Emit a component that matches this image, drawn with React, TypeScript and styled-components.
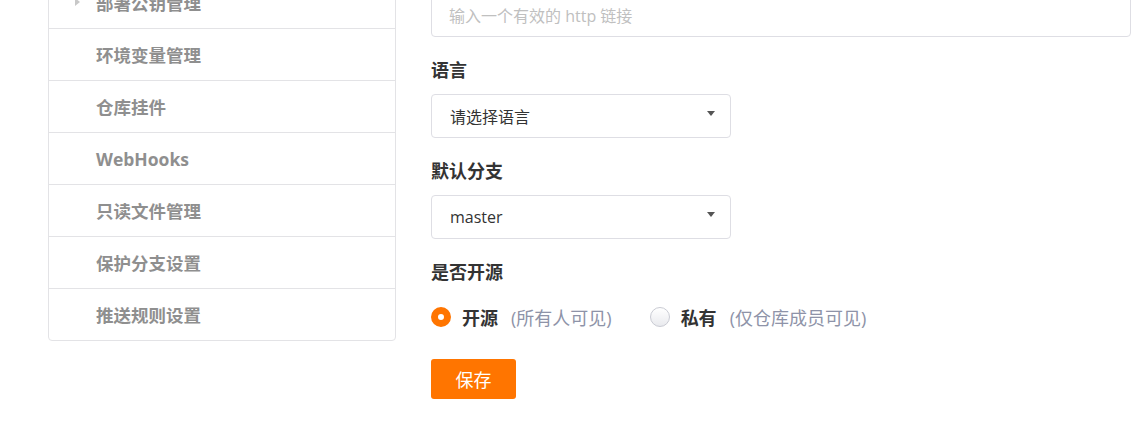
import React from "react";
import styled, { createGlobalStyle } from "styled-components";

const GlobalStyle = createGlobalStyle`
  html, body { margin: 0; padding: 0; background: #fff; }
  body {
    font-family: "Open Sans", "Noto Sans CJK SC", sans-serif;
    color: #333;
    overflow: hidden;
  }
`;

const Page = styled.div`
  display: flex;
  align-items: flex-start;
  gap: 35px;
  padding-left: 48px;
  margin-top: -24px;
`;

const Sidebar = styled.nav`
  width: 346px;
  border: 1px solid #e3e3e6;
  border-radius: 4px;
  background: #fff;
`;

const NavItem = styled.div`
  position: relative;
  height: 51px;
  display: flex;
  align-items: center;
  padding-left: 47px;
  font-size: 17.5px;
  font-weight: 700;
  color: #8f8f8f;
  border-bottom: 1px solid #e3e3e6;
  &:last-child { border-bottom: none; }
`;

const Caret = styled.span`
  position: absolute;
  left: 26px;
  top: 50%;
  margin-top: -5px;
  width: 0;
  height: 0;
  border-top: 4px solid transparent;
  border-bottom: 4px solid transparent;
  border-left: 5px solid #c8c8c8;
`;

const Main = styled.main`
  width: 700px;
  padding-top: 17px;
  display: flex;
  flex-direction: column;
`;

const TextInput = styled.div`
  box-sizing: border-box;
  height: 44px;
  border: 1px solid #dedee4;
  border-radius: 4px;
  display: flex;
  align-items: center;
  padding-left: 17px;
  font-size: 16px;
  color: #c0c0c0;
`;

const Label = styled.div`
  margin-top: 21px;
  height: 24px;
  line-height: 24px;
  font-size: 18px;
  font-weight: 700;
  color: #333;
`;

const Select = styled.div`
  box-sizing: border-box;
  margin-top: 12px;
  width: 300px;
  height: 44px;
  border: 1px solid #dedee4;
  border-radius: 4px;
  display: flex;
  align-items: center;
  justify-content: space-between;
  padding: 0 15px 0 18px;
  font-size: 16px;
  color: #333;
`;

const SelectArrow = styled.span`
  width: 0;
  height: 0;
  margin-top: -6px;
  border-left: 4px solid transparent;
  border-right: 4px solid transparent;
  border-top: 5px solid #555;
`;

const RadioRow = styled.div`
  margin-top: 21px;
  height: 24px;
  display: flex;
  align-items: center;
`;

const RadioOption = styled.label`
  display: flex;
  align-items: center;
  margin-right: 38px;
  cursor: pointer;
`;

const RadioCircle = styled.span<{ $checked?: boolean }>`
  box-sizing: border-box;
  width: 20px;
  height: 20px;
  border-radius: 50%;
  ${(p) =>
    p.$checked
      ? `border: 7px solid #ff7500; background: #fff;`
      : `border: 1px solid #c9cbd3; background: linear-gradient(#ffffff, #e9eaee);`}
`;

const RadioText = styled.span`
  margin-left: 11px;
  font-size: 18px;
  font-weight: 700;
  color: #333;
`;

const RadioHint = styled.span`
  margin-left: 13px;
  font-size: 18px;
  color: #8e93a8;
`;

const SaveButton = styled.button`
  margin-top: 30px;
  width: 85px;
  height: 40px;
  border: none;
  border-radius: 3px;
  background: #ff7500;
  color: #fff;
  font-family: inherit;
  font-size: 18px;
  cursor: pointer;
`;

const navItems = [
  "环境变量管理",
  "仓库挂件",
  "WebHooks",
  "只读文件管理",
  "保护分支设置",
  "推送规则设置",
];

export default function App() {
  return (
    <>
      <GlobalStyle />
      <Page>
        <Sidebar>
          <NavItem>
            <Caret />
            部署公钥管理
          </NavItem>
          {navItems.map((t) => (
            <NavItem key={t}>{t}</NavItem>
          ))}
        </Sidebar>
        <Main>
          <TextInput>输入一个有效的 http 链接</TextInput>
          <Label>语言</Label>
          <Select>
            请选择语言
            <SelectArrow />
          </Select>
          <Label>默认分支</Label>
          <Select>
            master
            <SelectArrow />
          </Select>
          <Label>是否开源</Label>
          <RadioRow>
            <RadioOption>
              <RadioCircle $checked />
              <RadioText>开源</RadioText>
              <RadioHint>(所有人可见)</RadioHint>
            </RadioOption>
            <RadioOption>
              <RadioCircle />
              <RadioText>私有</RadioText>
              <RadioHint>(仅仓库成员可见)</RadioHint>
            </RadioOption>
          </RadioRow>
          <div>
            <SaveButton>保存</SaveButton>
          </div>
        </Main>
      </Page>
    </>
  );
}
